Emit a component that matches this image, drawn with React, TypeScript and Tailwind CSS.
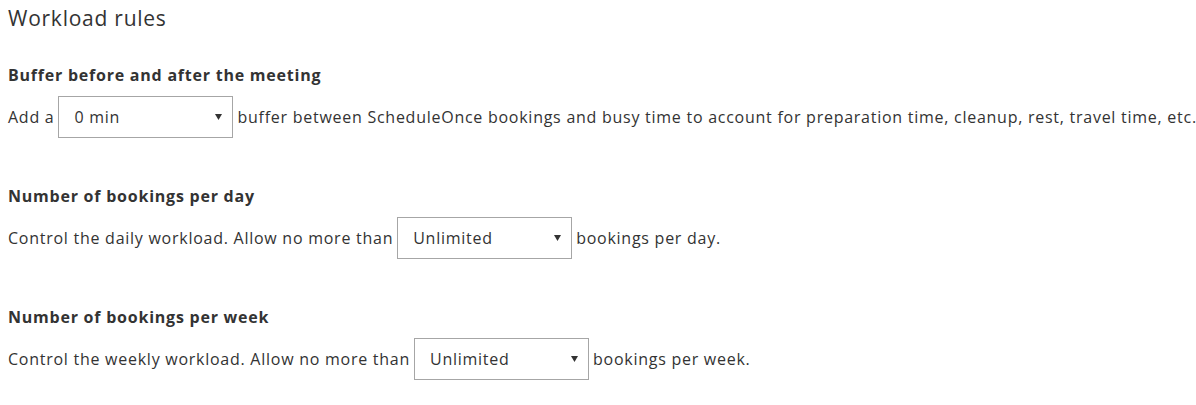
import React from "react";

function FakeSelect({ value }: { value: string }) {
  return (
    <div className="mx-1 flex h-[42px] w-[175px] shrink-0 items-center justify-between border border-[#a6a6a6] bg-white pl-[15px] pr-[10px]">
      <span>{value}</span>
      <svg width="7" height="6" viewBox="0 0 7 6" className="mb-px">
        <path d="M0 0 H7 L3.5 6 Z" fill="#333" />
      </svg>
    </div>
  );
}

function Rule({
  title,
  before,
  value,
  after,
}: {
  title: string;
  before: string;
  value: string;
  after: string;
}) {
  return (
    <section>
      <h3 className="text-[16px] font-bold leading-6 tracking-[0.77px]">{title}</h3>
      <div className="mt-[9px] flex items-center text-[16px] leading-6 tracking-[0.74px]">
        <span className="whitespace-nowrap">{before}</span>
        <FakeSelect value={value} />
        <span className="whitespace-nowrap">{after}</span>
      </div>
    </section>
  );
}

export default function App() {
  return (
    <div
      className="min-h-[405px] bg-white pl-2 pt-1 text-[#333]"
      style={{ fontFamily: '"Open Sans", sans-serif' }}
    >
      <h2 className="text-[21px] font-normal leading-7 tracking-[0.75px]">Workload rules</h2>
      <div className="mt-[31px] flex flex-col gap-[46px]">
        <Rule
          title="Buffer before and after the meeting"
          before="Add a"
          value="0 min"
          after="buffer between ScheduleOnce bookings and busy time to account for preparation time, cleanup, rest, travel time, etc."
        />
        <Rule
          title="Number of bookings per day"
          before="Control the daily workload. Allow no more than"
          value="Unlimited"
          after="bookings per day."
        />
        <Rule
          title="Number of bookings per week"
          before="Control the weekly workload. Allow no more than"
          value="Unlimited"
          after="bookings per week."
        />
      </div>
    </div>
  );
}
